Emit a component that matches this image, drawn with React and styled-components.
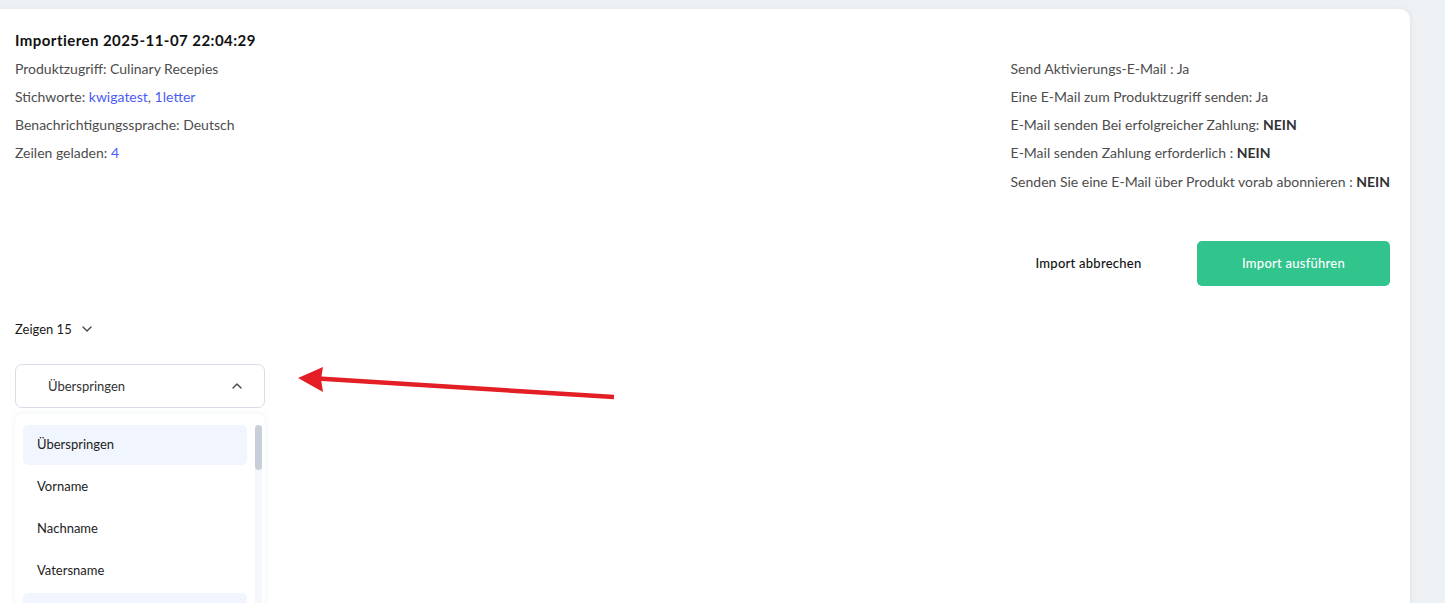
import React from "react";
import styled, { createGlobalStyle } from "styled-components";

const Global = createGlobalStyle`
  html, body { margin: 0; padding: 0; overflow: hidden; background: #eef1f3; }
  body { font-family: Lato, "Open Sans", sans-serif; color: #4a4a4a; }
  * { box-sizing: border-box; }
`;

const Page = styled.div`
  padding: 9px 35px 0 0;
  height: 603px;
`;

const Card = styled.div`
  position: relative;
  background: #fff;
  border-radius: 0 10px 0 0;
  box-shadow: 1px 0 4px rgba(120, 135, 150, 0.12);
  padding: 17px 20px 0 15px;
  height: 700px;
`;

const Top = styled.div`
  display: flex;
  justify-content: space-between;
  align-items: flex-start;
`;

const Column = styled.div`
  display: flex;
  flex-direction: column;
  padding-top: ${(p) => (p.$offset ? "29px" : "0")};
`;

const Title = styled.div`
  font-family: Lato, sans-serif;
  font-weight: 700;
  font-size: 15px;
  letter-spacing: 0.45px;
  line-height: 28px;
  color: #111;
  margin-bottom: 1px;
`;

const Row = styled.div`
  font-size: 14px;
  line-height: 28px;
  color: #4d4d4d;
  white-space: nowrap;
  margin-top: ${(p) => (p.$extra ? "1px" : "0")};
`;

const Link = styled.span`
  color: #4a5cf5;
`;

const Strong = styled.b`
  font-weight: 700;
  color: #333;
`;

const Actions = styled.div`
  display: flex;
  justify-content: flex-end;
  gap: 12px;
  margin-top: 45px;
`;

const Button = styled.button`
  width: 193px;
  height: 45px;
  padding: 0 0 1px;
  border: none;
  border-radius: 5px;
  font-family: Lato, sans-serif;
  font-size: 13px;
  font-weight: 500;
  letter-spacing: 0.25px;
  cursor: pointer;
  background: ${(p) => (p.$primary ? "#31c48d" : "transparent")};
  color: ${(p) => (p.$primary ? "#fff" : "#111")};
`;

const ShowRow = styled.div`
  display: flex;
  align-items: center;
  gap: 7px;
  margin-top: 33px;
  font-size: 13px;
  line-height: 20px;
  color: #1a1a1a;
`;

const SelectBox = styled.div`
  width: 250px;
  height: 44px;
  margin-top: 25px;
  border: 1px solid #dddbe8;
  border-radius: 7px;
  display: flex;
  align-items: center;
  justify-content: space-between;
  padding: 0 19px 0 32px;
  font-size: 13px;
  color: #333;
`;

const Menu = styled.div`
  width: 250px;
  margin-top: 6px;
  border-radius: 8px;
  box-shadow: 0 0 6px rgba(180, 195, 215, 0.25);
  padding: 11px 3px 0 8px;
  display: flex;
  gap: 8px;
  height: 300px;
`;

const Items = styled.div`
  flex: 1;
  display: flex;
  flex-direction: column;
  gap: 2px;
`;

const Item = styled.div`
  height: 40px;
  flex-shrink: 0;
  display: flex;
  align-items: center;
  padding: 0 0 2px 14px;
  border-radius: 5px;
  font-size: 13px;
  color: #222;
  background: ${(p) => (p.$active ? "#f1f5fe" : "transparent")};
`;

const Track = styled.div`
  width: 7px;
  background: #f4f7fb;
  border-radius: 4px;
  display: flex;
  flex-direction: column;
`;

const Thumb = styled.div`
  height: 45px;
  border-radius: 4px;
  background: #c9cfd8;
`;

const ArrowSvg = styled.svg`
  position: absolute;
  left: 290px;
  top: 351px;
`;

const Chevron = ({ up }) => (
  <svg width="16" height="16" viewBox="0 0 24 24" fill="none" stroke="#444" strokeWidth="2" strokeLinecap="round" strokeLinejoin="round">
    <path d={up ? "M6 15l6-6 6 6" : "M6 9l6 6 6-6"} />
  </svg>
);

export default function App() {
  return (
    <>
      <Global />
      <Page>
        <Card>
          <Top>
            <Column>
              <Title>Importieren 2025-11-07 22:04:29</Title>
              <Row>Produktzugriff: Culinary Recepies</Row>
              <Row>
                Stichworte: <Link>kwigatest</Link>, <Link>1letter</Link>
              </Row>
              <Row>Benachrichtigungssprache: Deutsch</Row>
              <Row>
                Zeilen geladen: <Link>4</Link>
              </Row>
            </Column>
            <Column $offset>
              <Row>Send Aktivierungs-E-Mail : Ja</Row>
              <Row>Eine E-Mail zum Produktzugriff senden: Ja</Row>
              <Row>
                E-Mail senden Bei erfolgreicher Zahlung: <Strong>NEIN</Strong>
              </Row>
              <Row>
                E-Mail senden Zahlung erforderlich : <Strong>NEIN</Strong>
              </Row>
              <Row $extra>
                Senden Sie eine E-Mail über Produkt vorab abonnieren : <Strong>NEIN</Strong>
              </Row>
            </Column>
          </Top>
          <Actions>
            <Button>Import abbrechen</Button>
            <Button $primary>Import ausführen</Button>
          </Actions>
          <ShowRow>
            Zeigen 15 <Chevron />
          </ShowRow>
          <SelectBox>
            <span>Überspringen</span>
            <Chevron up />
          </SelectBox>
          <Menu>
            <Items>
              <Item $active>Überspringen</Item>
              <Item>Vorname</Item>
              <Item>Nachname</Item>
              <Item>Vatersname</Item>
              <Item $active />
            </Items>
            <Track>
              <Thumb />
            </Track>
          </Menu>
          <ArrowSvg width="340" height="60" viewBox="290 360 340 60">
            <line x1="318" y1="378.6" x2="614" y2="397" stroke="#e31e24" strokeWidth="4.5" />
            <polygon points="298,378 323,367 321,379 323,392" fill="#e31e24" />
          </ArrowSvg>
        </Card>
      </Page>
    </>
  );
}
